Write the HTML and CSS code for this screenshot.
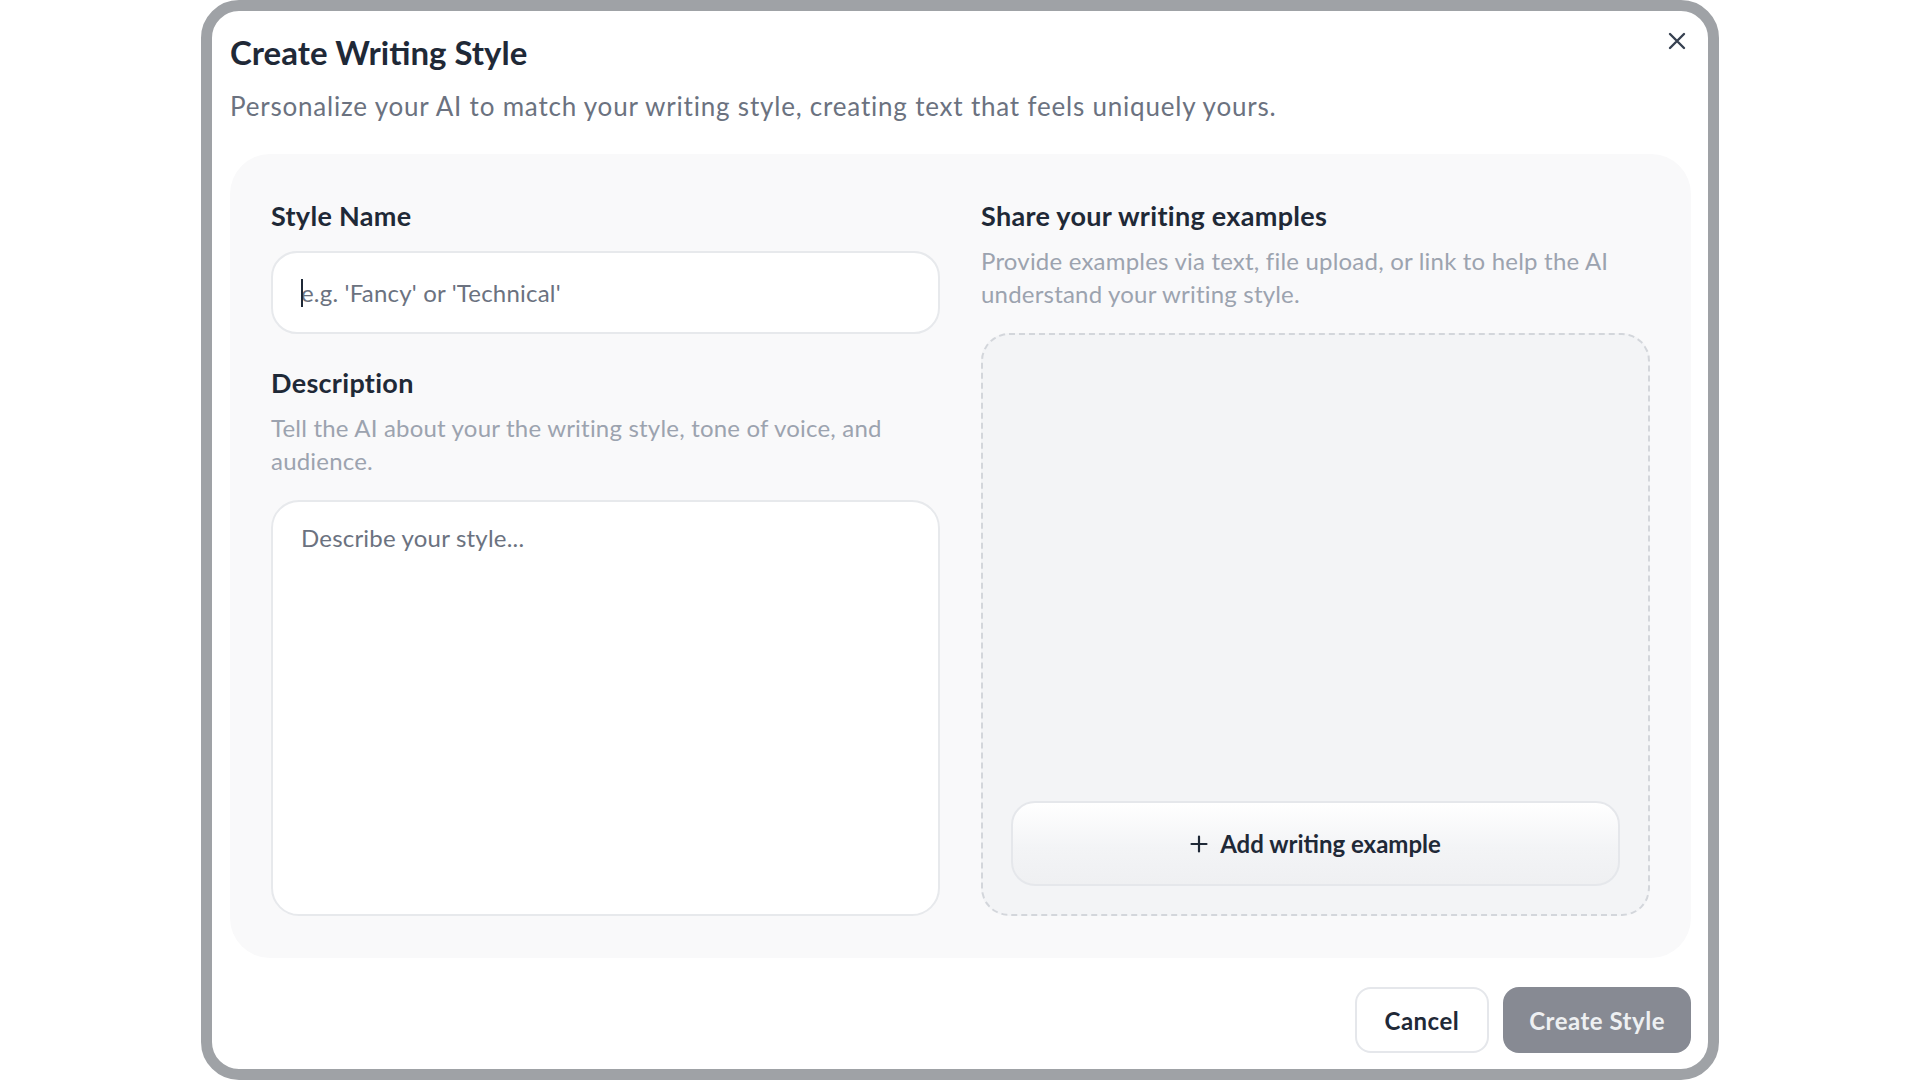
FILE: index.html
```
<!DOCTYPE html>
<html lang="en">
  <head>
    <meta charset="UTF-8" />
    <meta name="viewport" content="width=device-width, initial-scale=1.0" />
    <title>Create Writing Style</title>
    <link rel="stylesheet" href="styles.css">
  </head>
  <body>
    <div class="modal">
      <button type="button" class="close-btn" aria-label="Close">
        <svg width="18" height="18" viewBox="0 0 18 18" fill="none">
          <path d="M2 2L16 16M16 2L2 16" stroke="#374151" stroke-width="2.4" stroke-linecap="round" />
        </svg>
      </button>

      <h1 class="modal-title">Create Writing Style</h1>
      <p class="modal-subtitle">
        Personalize your AI to match your writing style, creating text that feels uniquely yours.
      </p>

      <form id="styleForm" class="form-panel">
        <div class="form-col">
          <label class="field-label" for="styleName">Style Name</label>
          <div class="input-wrap">
            <span class="caret"></span>
            <input type="text" id="styleName" class="text-input" placeholder="e.g. 'Fancy' or 'Technical'" />
          </div>

          <label class="field-label desc-label" for="styleDesc">Description</label>
          <p class="field-hint">Tell the AI about your the writing style, tone of voice, and audience.</p>
          <textarea id="styleDesc" class="text-area" placeholder="Describe your style..."></textarea>
        </div>

        <div class="form-col">
          <label class="field-label">Share your writing examples</label>
          <p class="field-hint">Provide examples via text, file upload, or link to help the AI understand your writing style.</p>
          <div class="examples-box">
            <button type="button" class="add-example-btn">
              <svg width="18" height="18" viewBox="0 0 18 18" fill="none">
                <path d="M9 1.5V16.5M1.5 9H16.5" stroke="#1f2937" stroke-width="2.2" stroke-linecap="round" />
              </svg>
              Add writing example
            </button>
          </div>
        </div>
      </form>

      <div class="modal-footer">
        <button type="button" class="cancel-btn">Cancel</button>
        <button type="submit" form="styleForm" class="create-btn">Create Style</button>
      </div>
    </div>
  </body>
</html>
```
FILE: styles.css
```
body {
  margin: 0;
  background: #fff;
  font-family: "Lato", "Liberation Sans", sans-serif;
  color: #1f2937;
}
.modal {
  position: relative;
  box-sizing: border-box;
  width: 1518px;
  height: 1080px;
  margin: 0 auto;
  padding: 21px 17px 0 18px;
  border: 11px solid #9fa2a6;
  border-radius: 38px;
  background: #fff;
  display: flex;
  flex-direction: column;
}
.close-btn {
  position: absolute;
  top: 14px;
  right: 15px;
  width: 32px;
  height: 32px;
  padding: 0;
  border: none;
  background: none;
  display: flex;
  align-items: center;
  justify-content: center;
  cursor: pointer;
}
.modal-title {
  margin: 0;
  font-size: 33px;
  line-height: 40px;
  font-weight: 700;
  color: #1f2937;
}
.modal-subtitle {
  margin: 17px 0 0;
  font-size: 26px;
  line-height: 34px;
  letter-spacing: 0.8px;
  color: #6b7280;
}
.form-panel {
  margin-top: 31px;
  padding: 46px 41px 42px;
  background: #f9f9fa;
  border-radius: 40px;
  display: grid;
  grid-template-columns: 1fr 1fr;
  gap: 41px;
}
.form-col {
  display: flex;
  flex-direction: column;
}
.field-label {
  display: block;
  font-size: 27px;
  line-height: 32px;
  font-weight: 700;
  letter-spacing: 0.3px;
  color: #1f2937;
}
.desc-label {
  margin-top: 33px;
}
.field-hint {
  margin: 12px 0 0;
  font-size: 24px;
  line-height: 33px;
  letter-spacing: 0.2px;
  color: #9ca3af;
}
.input-wrap {
  position: relative;
  margin-top: 19px;
}
.caret {
  position: absolute;
  left: 30px;
  top: 28px;
  width: 2px;
  height: 28px;
  background: #1f2937;
}
.text-input,
.text-area {
  box-sizing: border-box;
  width: 100%;
  border: 2px solid #e7e9ec;
  background: #fff;
  font-family: "Lato", "Liberation Sans", sans-serif;
  font-size: 24px;
  letter-spacing: 0.2px;
  color: #1f2937;
  outline: none;
}
.text-input {
  height: 83px;
  padding: 0 28px;
  border-radius: 26px;
}
.text-area {
  height: 416px;
  margin-top: 23px;
  padding: 20px 28px;
  line-height: 32px;
  border-radius: 28px;
  resize: none;
}
.text-input::placeholder,
.text-area::placeholder {
  color: #6b7280;
}
.examples-box {
  flex: 1;
  margin-top: 23px;
  padding: 28px;
  border: 2px dashed #d3d6db;
  border-radius: 28px;
  background: #f3f4f6;
  display: flex;
  flex-direction: column;
  justify-content: flex-end;
}
.add-example-btn {
  height: 85px;
  border: 2px solid #e5e7eb;
  border-radius: 24px;
  background: linear-gradient(180deg, #ffffff 0%, #f3f4f6 55%, #eff0f2 100%);
  font-family: "Lato", "Liberation Sans", sans-serif;
  font-size: 24px;
  font-weight: 700;
  color: #1f2937;
  display: flex;
  align-items: center;
  justify-content: center;
  gap: 12px;
  cursor: pointer;
}
.modal-footer {
  margin-top: 29px;
  display: flex;
  justify-content: flex-end;
  gap: 14px;
}
.cancel-btn,
.create-btn {
  height: 66px;
  padding: 0 28px;
  border-radius: 16px;
  font-family: "Lato", "Liberation Sans", sans-serif;
  font-size: 24px;
  font-weight: 700;
  letter-spacing: 0.5px;
  cursor: pointer;
}
.cancel-btn {
  border: 2px solid #e5e7eb;
  background: #fff;
  color: #1f2937;
}
.create-btn {
  border: none;
  padding: 0 26px;
  background: #878a93;
  color: #eef0f2;
}
```
